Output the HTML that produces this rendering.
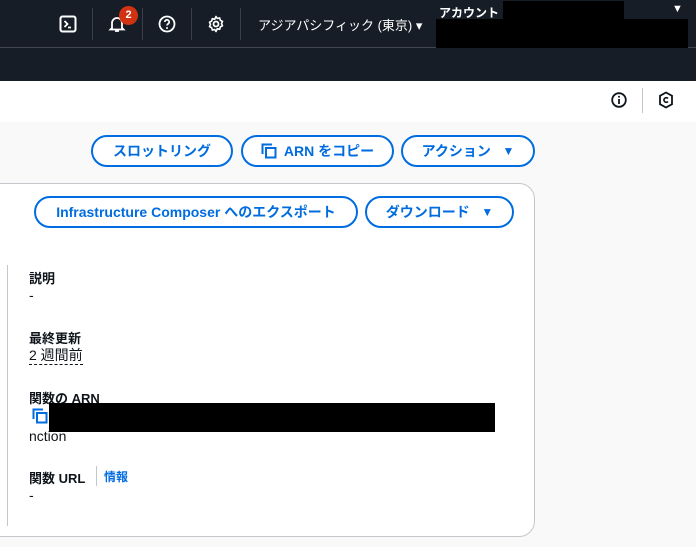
<!DOCTYPE html>
<html><head><meta charset="utf-8"><style>
*{box-sizing:border-box;margin:0;padding:0}
body{width:696px;height:547px;overflow:hidden;background:#fff;font-family:"Liberation Sans","Noto Sans CJK JP",sans-serif;position:relative}
.top{position:absolute;left:0;top:0;width:696px;height:48px;background:#161d26;border-bottom:1px solid #424650}
.sub{position:absolute;left:0;top:48px;width:696px;height:33px;background:#161d26}
.abs{position:absolute}
.sep{position:absolute;top:8px;width:1px;height:32px;background:#3b3f47}
.grey{position:absolute;left:0;top:122px;width:696px;height:425px;background:#f9f9f9}
.card{position:absolute;left:-20px;top:183px;width:555px;height:354px;background:#fff;border:1px solid #c6c6cd;border-radius:16px}
.btn{position:absolute;height:32px;border:2px solid #006ce0;border-radius:20px;color:#006ce0;font-weight:bold;font-size:14px;display:flex;align-items:center;justify-content:center;background:#fff}
.lbl{position:absolute;left:29px;font-size:13px;font-weight:bold;color:#0f141a}
.val{position:absolute;left:29px;font-size:14px;color:#0f141a}
</style></head><body>
<div class="top"></div><div class="sub"></div>
<svg class="abs" style="left:59px;top:15px" width="18" height="18" viewBox="0 0 18 18"><rect x="1.5" y="1.5" width="15" height="15" rx="2" fill="none" stroke="#fff" stroke-width="2"/><path d="M5.5 6l3 3-3 3M9 12.5h3" stroke="#fff" stroke-width="1.8" fill="none"/></svg>
<div class="sep" style="left:92px"></div>
<svg class="abs" style="left:108px;top:15px" width="18" height="18" viewBox="0 0 18 18"><path d="M4 13V8a5 5 0 0110 0v5l1.5 1.5h-13z M7 16h4" stroke="#fff" stroke-width="1.8" fill="none"/></svg>
<div class="abs" style="left:119px;top:6px;width:19px;height:19px;border-radius:50%;background:#d13212;color:#fff;font-size:11px;font-weight:bold;text-align:center;line-height:19px">2</div>
<div class="sep" style="left:142px"></div>
<svg class="abs" style="left:158px;top:15px" width="18" height="18" viewBox="0 0 18 18"><circle cx="9" cy="9" r="7.5" fill="none" stroke="#fff" stroke-width="1.8"/><path d="M6.8 7a2.2 2.2 0 114 1.3c-.8.6-1.8 1-1.8 2.2" stroke="#fff" stroke-width="1.7" fill="none"/><circle cx="9" cy="13" r="1" fill="#fff"/></svg>
<div class="sep" style="left:191px"></div>
<svg class="abs" style="left:207px;top:15px" width="18" height="18" viewBox="0 0 18 18"><circle cx="9" cy="9" r="2.5" fill="none" stroke="#fff" stroke-width="1.8"/><path d="M9 1.5l1.3 2 2.4-.6.6 2.4 2.2 1.1-1 2.2 1 2.2-2.2 1.1-.6 2.4-2.4-.6L9 16.5l-1.3-2-2.4.6-.6-2.4-2.2-1.1 1-2.2-1-2.2 2.2-1.1.6-2.4 2.4.6z" fill="none" stroke="#fff" stroke-width="1.6" stroke-linejoin="round"/></svg>
<div class="sep" style="left:240px"></div>
<div class="abs" style="left:258px;top:15px;color:#fff;font-size:13px">アジアパシフィック (東京) ▾</div>
<div class="abs" style="left:503px;top:1px;width:121px;height:18px;background:#000"></div>
<div class="abs" style="left:436px;top:19px;width:252px;height:29px;background:#000"></div>
<div class="abs" style="left:439px;top:4px;color:#fff;font-size:12px;font-weight:bold;white-space:nowrap">アカウント</div>
<div class="abs" style="left:672px;top:3px;color:#fff;font-size:11px">▼</div>
<svg class="abs" style="left:611px;top:92px" width="16" height="16" viewBox="0 0 16 16"><circle cx="8" cy="8" r="6.8" fill="none" stroke="#0f141a" stroke-width="1.8"/><path d="M8 7v5" stroke="#0f141a" stroke-width="1.8"/><circle cx="8" cy="4.8" r="1" fill="#0f141a"/></svg>
<div class="abs" style="left:642px;top:88px;width:1px;height:25px;background:#c6c6cd"></div>
<svg class="abs" style="left:658px;top:91px" width="16" height="18" viewBox="0 0 16 18"><path d="M8 1.5l6 3.3v8.4L8 16.5 2 13.2V4.8z" fill="none" stroke="#0f141a" stroke-width="1.8"/><path d="M10 7.5a2.3 2.3 0 100 3" stroke="#0f141a" stroke-width="1.6" fill="none"/></svg>
<div class="grey"></div>
<div class="btn" style="left:91px;top:135px;width:142px">スロットリング</div>
<div class="btn" style="left:241px;top:135px;width:153px"><svg width="16" height="16" viewBox="0 0 16 16" style="margin-right:7px"><path d="M1.5 11V1.5H11" stroke="#006ce0" stroke-width="2" fill="none"/><rect x="5" y="5" width="9.5" height="9.5" fill="none" stroke="#006ce0" stroke-width="2"/></svg>ARN をコピー</div>
<div class="btn" style="left:401px;top:135px;width:134px">アクション&nbsp;&nbsp;&nbsp;<span style="font-size:12px">▼</span></div>
<div class="card"></div>
<div class="btn" style="left:34px;top:196px;width:324px">Infrastructure Composer へのエクスポート</div>
<div class="btn" style="left:365px;top:196px;width:149px">ダウンロード&nbsp;&nbsp;&nbsp;<span style="font-size:12px">▼</span></div>
<div class="abs" style="left:7px;top:265px;width:1px;height:261px;background:#c6c6cd"></div>
<div class="lbl" style="top:268px">説明</div>
<div class="val" style="top:287px">-</div>
<div class="lbl" style="top:328px">最終更新</div>
<div class="val" style="top:346px;border-bottom:1px dashed #0f141a;line-height:18px">2 週間前</div>
<div class="lbl" style="top:388px">関数の ARN</div>
<svg class="abs" style="left:32px;top:408px" width="16" height="16" viewBox="0 0 16 16"><path d="M1.5 11V1.5H11" stroke="#006ce0" stroke-width="2" fill="none"/><rect x="5" y="5" width="9.5" height="9.5" fill="none" stroke="#006ce0" stroke-width="2"/></svg>
<div class="abs" style="left:49px;top:403px;width:446px;height:29px;background:#000"></div>
<div class="val" style="top:428px">nction</div>
<div class="lbl" style="top:468px">関数 URL</div>
<div class="abs" style="left:96px;top:466px;width:1px;height:20px;background:#c6c6cd"></div>
<div class="abs" style="left:104px;top:468px;font-size:12px;font-weight:bold;color:#006ce0">情報</div>
<div class="val" style="top:487px">-</div>
</body></html>
